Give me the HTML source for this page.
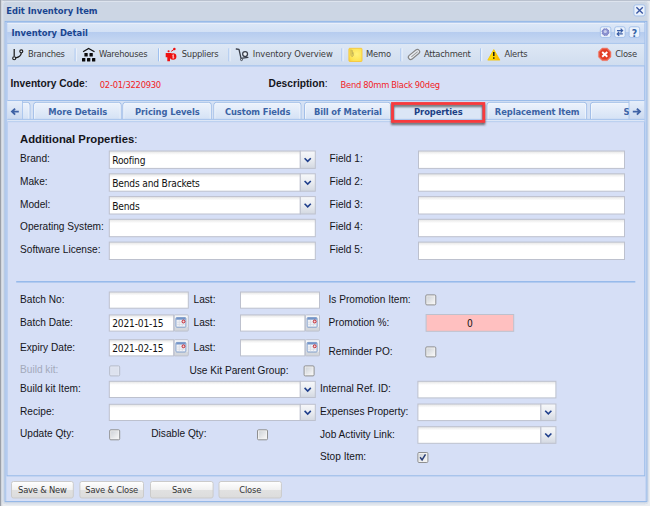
<!DOCTYPE html>
<html><head><meta charset="utf-8"><title>Edit Inventory Item</title>
<style>
*{box-sizing:border-box;margin:0;padding:0}
html,body{width:650px;height:506px;overflow:hidden;background:#e9ecf0}
body{position:relative;font-family:"DejaVu Sans Condensed","Liberation Sans",sans-serif;font-size:9.3px;color:#222}
#bg{position:absolute;left:0;top:0;display:block}
.t,.lbl{position:absolute;white-space:nowrap;line-height:14px}
.t{font-family:"DejaVu Sans Condensed","Liberation Sans",sans-serif;font-size:9.3px;letter-spacing:-0.2px}
.tbt{color:#3a3a3a}
.lbl{font-family:"Liberation Sans",sans-serif;font-size:10.15px;color:#15151a}
</style></head>
<body>
<svg id="bg" width="650" height="506" viewBox="0 0 650 506">
<defs>
<linearGradient id="gi" x1="0" y1="0" x2="0" y2="1"><stop offset="0" stop-color="#e4e4e4"/><stop offset="0.22" stop-color="#fff"/><stop offset="1" stop-color="#fff"/></linearGradient>
<linearGradient id="gt" x1="0" y1="0" x2="0" y2="1"><stop offset="0" stop-color="#f7f8fa"/><stop offset="0.5" stop-color="#e9ecf1"/><stop offset="1" stop-color="#d3d8e1"/></linearGradient>
<linearGradient id="gd" x1="0" y1="0" x2="0" y2="1"><stop offset="0" stop-color="#f6f7f9"/><stop offset="0.74" stop-color="#eceef2"/><stop offset="0.78" stop-color="#d6d9de"/><stop offset="1" stop-color="#d2d5da"/></linearGradient>
<linearGradient id="gc" x1="0" y1="0" x2="1" y2="1"><stop offset="0" stop-color="#cfd3d8"/><stop offset="1" stop-color="#f6f6f6"/></linearGradient>
<linearGradient id="gh" x1="0" y1="0" x2="0" y2="1"><stop offset="0" stop-color="#dde8f7"/><stop offset="0.43" stop-color="#d3e1f5"/><stop offset="0.47" stop-color="#b6ccef"/><stop offset="1" stop-color="#c7d8f2"/></linearGradient>
<linearGradient id="gtb" x1="0" y1="0" x2="0" y2="1"><stop offset="0" stop-color="#dee8f5"/><stop offset="1" stop-color="#d0ddef"/></linearGradient>
<linearGradient id="gtab" x1="0" y1="0" x2="0" y2="1"><stop offset="0" stop-color="#edf3fc"/><stop offset="1" stop-color="#d5e2f5"/></linearGradient>
<linearGradient id="gsc" x1="0" y1="0" x2="0" y2="1"><stop offset="0" stop-color="#e6eefa"/><stop offset="1" stop-color="#ccdaf0"/></linearGradient>
<radialGradient id="gm" cx="0.6" cy="0.45" r="0.75"><stop offset="0" stop-color="#fff27c"/><stop offset="0.7" stop-color="#fde353"/><stop offset="1" stop-color="#f9cf3e"/></radialGradient>
<linearGradient id="ga" x1="0" y1="0" x2="1" y2="0"><stop offset="0" stop-color="#ffe010"/><stop offset="0.55" stop-color="#ffd400"/><stop offset="1" stop-color="#ffa800"/></linearGradient>
<linearGradient id="gb" x1="0" y1="0" x2="0" y2="1"><stop offset="0" stop-color="#ffffff"/><stop offset="0.5" stop-color="#f1f1f1"/><stop offset="0.54" stop-color="#e1e1e1"/><stop offset="1" stop-color="#dcdcdc"/></linearGradient>
<filter id="sh" x="-10%" y="-30%" width="120%" height="180%"><feGaussianBlur stdDeviation="1.3"/></filter>
<clipPath id="cstrip"><rect x="7.4" y="100.9" width="621.6" height="18.2"/></clipPath>
</defs>
<rect x="0.00" y="0.00" width="650.00" height="506.00" fill="#e9ecf0"/>
<rect x="0.00" y="0.00" width="650.00" height="0.90" fill="#b4bdca"/>
<rect x="0.00" y="0.00" width="1.40" height="506.00" fill="#9a9fa8"/>
<rect x="1.40" y="0.00" width="1.00" height="506.00" fill="#d8dce2"/>
<rect x="2.30" y="1.00" width="646.40" height="503.20" rx="4" fill="#ccd6e4"/>
<rect x="2.80" y="1.50" width="645.40" height="502.20" rx="3.5" fill="none" stroke="#dde4ee" stroke-width="1"/>
<rect x="5.15" y="21.40" width="641.70" height="480.10" fill="#d6dff6" stroke="#95b8e8" stroke-width="1.0"/>
<rect x="6.90" y="22.20" width="637.90" height="453.60" fill="#d6dff6" stroke="#95b8e8" stroke-width="1.0"/>
<rect x="5.60" y="22.50" width="0.80" height="478.50" fill="#bbd0ef"/>
<rect x="645.40" y="22.50" width="0.80" height="478.50" fill="#bbd0ef"/>
<rect x="7.40" y="22.90" width="636.90" height="20.00" fill="url(#gh)"/>
<rect x="7.40" y="22.90" width="636.90" height="0.80" fill="#eef3fb"/>
<rect x="7.40" y="42.90" width="636.90" height="0.90" fill="#95b8e8"/>
<rect x="7.40" y="43.80" width="636.90" height="21.70" fill="url(#gtb)"/>
<rect x="7.40" y="65.45" width="636.90" height="0.90" fill="#95b8e8"/>
<rect x="633.95" y="4.85" width="11.10" height="11.10" rx="2" fill="#ebf2fc" stroke="#9fbde9" stroke-width="0.9"/>
<path d="M636.4 7.2 L642.8 13.6 M642.8 7.2 L636.4 13.6" stroke="#3a57a2" stroke-width="1.35" fill="none"/>
<rect x="600.35" y="26.75" width="10.50" height="10.70" rx="2" fill="#ebf2fc" stroke="#9fbde9" stroke-width="0.9"/>
<circle cx="605.45" cy="32.1" r="3.45" fill="#8a90cf" stroke="#6c74bd" stroke-width="1.0" stroke-dasharray="1.6 1.1"/><circle cx="605.45" cy="32.1" r="3.0" fill="#8a90cf"/><circle cx="605.3" cy="31.5" r="1.6" fill="#c9cfee"/>
<rect x="614.65" y="26.75" width="10.50" height="10.70" rx="2" fill="#ebf2fc" stroke="#9fbde9" stroke-width="0.9"/>
<path d="M617 30.6 H622.2 M620.6 28.6 L622.6 30.6 L620.6 32.6 M622.8 33.9 H617.6 M619.2 31.9 L617.2 33.9 L619.2 35.9" fill="none" stroke="#3b5ea6" stroke-width="1.25"/>
<rect x="629.15" y="26.75" width="10.50" height="10.70" rx="2" fill="#ebf2fc" stroke="#9fbde9" stroke-width="0.9"/>
<path d="M14.2 49.0 V56.6 M15.8 57.9 C19.2 57.2 21.0 55.6 21.3 53.2" fill="none" stroke="#1c1c1c" stroke-width="1.25"/><circle cx="14.2" cy="58.2" r="1.5" fill="#e4ecf8" stroke="#1c1c1c" stroke-width="1.15"/><circle cx="21.3" cy="51.3" r="1.5" fill="#e4ecf8" stroke="#1c1c1c" stroke-width="1.15"/>
<rect x="74.73" y="48.30" width="0.95" height="13.00" fill="#97bbee"/>
<rect x="75.68" y="48.30" width="0.95" height="13.00" fill="#f4f8fd"/>
<path d="M83.1 51.8 L88.6 48.4 L94.5 51.8" fill="none" stroke="#111" stroke-width="1.3" stroke-linejoin="miter"/>
<rect x="84.40" y="53.00" width="3.30" height="3.40" rx="0.5" fill="#0a0a0a"/>
<rect x="89.50" y="53.00" width="3.30" height="3.40" rx="0.5" fill="#0a0a0a"/>
<rect x="82.00" y="58.00" width="3.30" height="3.40" rx="0.5" fill="#0a0a0a"/>
<rect x="87.00" y="58.00" width="3.30" height="3.40" rx="0.5" fill="#0a0a0a"/>
<rect x="92.00" y="58.00" width="3.30" height="3.40" rx="0.5" fill="#0a0a0a"/>
<rect x="158.12" y="48.30" width="0.95" height="13.00" fill="#97bbee"/>
<rect x="159.07" y="48.30" width="0.95" height="13.00" fill="#f4f8fd"/>
<g fill="#ee1111"><circle cx="168.6" cy="51.3" r="1.05"/><path d="M165.7 52.9 H171.6 V57.2 H170 V61.2 H167.3 V57.2 H165.7 Z"/><circle cx="173.1" cy="56.5" r="3.3"/><circle cx="174.4" cy="49.0" r="1.25"/><path d="M171.2 51.4 L174.2 49.2" stroke="#ee1111" stroke-width="1.0"/></g><path d="M173.2 54.4 V58.6 M174.0 55.2 Q172.4 54.8 172.5 55.9 Q172.6 56.5 173.3 56.6 Q174.2 56.8 174.0 57.5 Q173.6 58.2 172.4 57.8" fill="none" stroke="#ffd9d9" stroke-width="0.7"/>
<rect x="228.53" y="48.30" width="0.95" height="13.00" fill="#97bbee"/>
<rect x="229.47" y="48.30" width="0.95" height="13.00" fill="#f4f8fd"/>
<path d="M236.3 49.0 L239.0 49.3 L241.0 58.3 L247.9 57.3" fill="none" stroke="#3a3f4a" stroke-width="1.3" stroke-linejoin="round" stroke-linecap="round"/><circle cx="245.1" cy="54.1" r="2.45" fill="#eef2f9" stroke="#3a3f4a" stroke-width="1.25"/><circle cx="241.5" cy="59.6" r="1.0" fill="#dfe6f1" stroke="#3a3f4a" stroke-width="0.9"/>
<rect x="341.52" y="48.30" width="0.95" height="13.00" fill="#97bbee"/>
<rect x="342.47" y="48.30" width="0.95" height="13.00" fill="#f4f8fd"/>
<rect x="348.9" y="48.3" width="13.1" height="13.2" rx="0.8" fill="url(#gm)" stroke="#f6c63c" stroke-width="0.9"/><path d="M351.0 49.6 V55.2 Q351.6 57.4 353.0 56.0 Q353.6 55.2 353.0 52.2 M352.0 50.0 Q352.6 52.6 352.4 54.6" fill="none" stroke="#b5a655" stroke-width="0.8"/>
<rect x="400.52" y="48.30" width="0.95" height="13.00" fill="#97bbee"/>
<rect x="401.47" y="48.30" width="0.95" height="13.00" fill="#f4f8fd"/>
<g transform="translate(414.0 54.45) rotate(-39.5)"><rect x="-6.6" y="-2.3" width="13.2" height="4.6" rx="2.3" fill="#e9edf3" stroke="#858585" stroke-width="1.15"/><path d="M-3.6 0.2 H4.6" stroke="#9b9b9b" stroke-width="1.0" fill="none"/></g>
<rect x="480.32" y="48.30" width="0.95" height="13.00" fill="#97bbee"/>
<rect x="481.27" y="48.30" width="0.95" height="13.00" fill="#f4f8fd"/>
<path d="M493.8 49.6 L499.9 60.1 H487.8 Z" fill="url(#ga)" stroke="#f6c500" stroke-width="0.8" stroke-linejoin="round"/><path d="M493.8 52.0 V56.0" stroke="#16161a" stroke-width="1.5"/><rect x="493.1" y="57.3" width="1.4" height="1.5" fill="#16161a"/>
<path d="M602.09 48.05 H607.31 L611.00 51.74 V56.96 L607.31 60.65 H602.09 L598.40 56.96 V51.74 Z" fill="#ef6b58" stroke="#ef7a68" stroke-width="0.5" stroke-linejoin="round"/><path d="M602.59 49.25 H606.81 L609.80 52.24 V56.46 L606.81 59.45 H602.59 L599.60 56.46 V52.24 Z" fill="#e23c22"/>
<path d="M602.2 52.0 L607.3 56.8 M607.3 52.0 L602.2 56.8" stroke="#fff" stroke-width="1.9" fill="none"/>
<rect x="7.40" y="100.00" width="636.90" height="22.20" fill="#d5e1f4"/>
<rect x="7.40" y="100.00" width="636.90" height="0.90" fill="#95b8e8"/>
<path d="M20.50 119.2 V104.90 Q20.50 102.4 23.00 102.4 H27.40 Q29.90 102.4 29.90 104.9 V119.2" fill="url(#gtab)" stroke="#9dbbe7" stroke-width="1" clip-path="url(#cstrip)"/>
<path d="M21.40 119 V105.2 Q21.40 103.3 23.40 103.3 H27.00 Q29.00 103.3 29.00 105.2 V119" fill="none" stroke="#f4f8fd" stroke-width="0.8" clip-path="url(#cstrip)"/>
<path d="M33.70 119.2 V104.90 Q33.70 102.4 36.20 102.4 H118.60 Q121.10 102.4 121.10 104.9 V119.2" fill="url(#gtab)" stroke="#9dbbe7" stroke-width="1" clip-path="url(#cstrip)"/>
<path d="M34.60 119 V105.2 Q34.60 103.3 36.60 103.3 H118.20 Q120.20 103.3 120.20 105.2 V119" fill="none" stroke="#f4f8fd" stroke-width="0.8" clip-path="url(#cstrip)"/>
<path d="M122.90 119.2 V104.90 Q122.90 102.4 125.40 102.4 H208.70 Q211.20 102.4 211.20 104.9 V119.2" fill="url(#gtab)" stroke="#9dbbe7" stroke-width="1" clip-path="url(#cstrip)"/>
<path d="M123.80 119 V105.2 Q123.80 103.3 125.80 103.3 H208.30 Q210.30 103.3 210.30 105.2 V119" fill="none" stroke="#f4f8fd" stroke-width="0.8" clip-path="url(#cstrip)"/>
<path d="M213.90 119.2 V104.90 Q213.90 102.4 216.40 102.4 H298.40 Q300.90 102.4 300.90 104.9 V119.2" fill="url(#gtab)" stroke="#9dbbe7" stroke-width="1" clip-path="url(#cstrip)"/>
<path d="M214.80 119 V105.2 Q214.80 103.3 216.80 103.3 H298.00 Q300.00 103.3 300.00 105.2 V119" fill="none" stroke="#f4f8fd" stroke-width="0.8" clip-path="url(#cstrip)"/>
<path d="M304.60 119.2 V104.90 Q304.60 102.4 307.10 102.4 H388.10 Q390.60 102.4 390.60 104.9 V119.2" fill="url(#gtab)" stroke="#9dbbe7" stroke-width="1" clip-path="url(#cstrip)"/>
<path d="M305.50 119 V105.2 Q305.50 103.3 307.50 103.3 H387.70 Q389.70 103.3 389.70 105.2 V119" fill="none" stroke="#f4f8fd" stroke-width="0.8" clip-path="url(#cstrip)"/>
<path d="M393.70 119.2 V104.90 Q393.70 102.4 396.20 102.4 H479.80 Q482.30 102.4 482.30 104.9 V119.2" fill="#dbe6f6" stroke="#9dbbe7" stroke-width="1" clip-path="url(#cstrip)"/>
<path d="M487.10 119.2 V104.90 Q487.10 102.4 489.60 102.4 H584.10 Q586.60 102.4 586.60 104.9 V119.2" fill="url(#gtab)" stroke="#9dbbe7" stroke-width="1" clip-path="url(#cstrip)"/>
<path d="M488.00 119 V105.2 Q488.00 103.3 490.00 103.3 H583.70 Q585.70 103.3 585.70 105.2 V119" fill="none" stroke="#f4f8fd" stroke-width="0.8" clip-path="url(#cstrip)"/>
<path d="M590.50 119.2 V104.90 Q590.50 102.4 593.00 102.4 H647.00 Q649.50 102.4 649.50 104.9 V119.2" fill="url(#gtab)" stroke="#9dbbe7" stroke-width="1" clip-path="url(#cstrip)"/>
<path d="M591.40 119 V105.2 Q591.40 103.3 593.40 103.3 H646.60 Q648.60 103.3 648.60 105.2 V119" fill="none" stroke="#f4f8fd" stroke-width="0.8" clip-path="url(#cstrip)"/>
<rect x="7.40" y="100.90" width="14.90" height="18.20" fill="url(#gsc)"/>
<rect x="22.05" y="100.90" width="0.90" height="18.30" fill="#a9c4ec"/>
<path d="M18.8 111.6 H12.6 M15.1 108.6 L12.0 111.6 L15.1 114.6" fill="none" stroke="#3f62a5" stroke-width="1.9"/>
<rect x="629.20" y="100.90" width="15.10" height="18.20" fill="url(#gsc)"/>
<rect x="628.55" y="100.90" width="0.90" height="18.30" fill="#a9c4ec"/>
<path d="M632.8 111.6 H639.4 M636.9 108.6 L640.0 111.6 L636.9 114.6" fill="none" stroke="#3f62a5" stroke-width="1.9"/>
<rect x="7.40" y="118.90" width="636.90" height="0.90" fill="#95b8e8"/>
<rect x="7.40" y="119.80" width="636.90" height="1.50" fill="#dde7f7"/>
<rect x="7.40" y="121.25" width="636.90" height="0.90" fill="#b4cbee"/>
<rect x="392.5" y="105.5" width="91.3" height="18.0" fill="none" stroke="#3c3c3c" stroke-opacity="0.75" stroke-width="2.8" filter="url(#sh)"/>
<rect x="392.50" y="103.50" width="91.30" height="17.90" fill="none" stroke="#f93a3d" stroke-width="2.8"/>
<rect x="109.30" y="151.00" width="191.00" height="17.40" fill="url(#gi)" stroke="#bdc1ce" stroke-width="1"/>
<rect x="300.30" y="151.00" width="15.00" height="17.40" fill="url(#gt)" stroke="#bdc1ce" stroke-width="1"/>
<path d="M304.60 158.20 L307.70 161.30 L310.80 158.20" fill="none" stroke="#1f3f8c" stroke-width="1.6"/>
<rect x="418.50" y="151.00" width="206.00" height="17.40" fill="url(#gi)" stroke="#bdc1ce" stroke-width="1"/>
<rect x="109.30" y="173.80" width="191.00" height="17.40" fill="url(#gi)" stroke="#bdc1ce" stroke-width="1"/>
<rect x="300.30" y="173.80" width="15.00" height="17.40" fill="url(#gt)" stroke="#bdc1ce" stroke-width="1"/>
<path d="M304.60 181.00 L307.70 184.10 L310.80 181.00" fill="none" stroke="#1f3f8c" stroke-width="1.6"/>
<rect x="418.50" y="173.80" width="206.00" height="17.40" fill="url(#gi)" stroke="#bdc1ce" stroke-width="1"/>
<rect x="109.30" y="196.60" width="191.00" height="17.40" fill="url(#gi)" stroke="#bdc1ce" stroke-width="1"/>
<rect x="300.30" y="196.60" width="15.00" height="17.40" fill="url(#gt)" stroke="#bdc1ce" stroke-width="1"/>
<path d="M304.60 203.80 L307.70 206.90 L310.80 203.80" fill="none" stroke="#1f3f8c" stroke-width="1.6"/>
<rect x="418.50" y="196.60" width="206.00" height="17.40" fill="url(#gi)" stroke="#bdc1ce" stroke-width="1"/>
<rect x="109.30" y="219.30" width="206.00" height="17.40" fill="url(#gi)" stroke="#bdc1ce" stroke-width="1"/>
<rect x="418.50" y="219.30" width="206.00" height="17.40" fill="url(#gi)" stroke="#bdc1ce" stroke-width="1"/>
<rect x="109.30" y="242.10" width="206.00" height="17.40" fill="url(#gi)" stroke="#bdc1ce" stroke-width="1"/>
<rect x="418.50" y="242.10" width="206.00" height="17.40" fill="url(#gi)" stroke="#bdc1ce" stroke-width="1"/>
<rect x="16.20" y="281.05" width="619.10" height="1.50" fill="#94b8ea"/>
<rect x="109.30" y="292.00" width="79.00" height="16.20" fill="url(#gi)" stroke="#bdc1ce" stroke-width="1"/>
<rect x="240.50" y="292.00" width="79.00" height="16.20" fill="url(#gi)" stroke="#bdc1ce" stroke-width="1"/>
<g>
<rect x="425.80" y="294.90" width="10.00" height="10.00" rx="1.1" fill="#f3f3f3" stroke="#8e8f90" stroke-width="1"/>
<rect x="427.20" y="296.30" width="7.20" height="7.20" fill="url(#gc)"/>
</g>
<rect x="109.30" y="314.90" width="64.40" height="16.20" fill="url(#gi)" stroke="#bdc1ce" stroke-width="1"/>
<rect x="174.20" y="314.90" width="14.10" height="16.20" rx="1" fill="url(#gd)" stroke="#bdc1ce" stroke-width="1"/>
<rect x="175.90" y="317.60" width="10.00" height="9.60" rx="0.8" fill="#f1f3f7" stroke="#7f9dca" stroke-width="1.0"/>
<rect x="176.20" y="317.80" width="9.40" height="1.90" fill="#7394c8"/>
<path d="M176.70 322.20 H185.10 M176.70 324.40 H185.10 M179.30 320.00 V326.60 M182.30 320.00 V326.60" stroke="#d4d9e2" stroke-width="0.7" fill="none"/>
<circle cx="183.50" cy="321.50" r="1.45" fill="#f6d9da" stroke="#c2222c" stroke-width="1.0"/>
<rect x="240.50" y="314.90" width="64.40" height="16.20" fill="url(#gi)" stroke="#bdc1ce" stroke-width="1"/>
<rect x="305.40" y="314.90" width="14.10" height="16.20" rx="1" fill="url(#gd)" stroke="#bdc1ce" stroke-width="1"/>
<rect x="307.10" y="317.60" width="10.00" height="9.60" rx="0.8" fill="#f1f3f7" stroke="#7f9dca" stroke-width="1.0"/>
<rect x="307.40" y="317.80" width="9.40" height="1.90" fill="#7394c8"/>
<path d="M307.90 322.20 H316.30 M307.90 324.40 H316.30 M310.50 320.00 V326.60 M313.50 320.00 V326.60" stroke="#d4d9e2" stroke-width="0.7" fill="none"/>
<circle cx="314.70" cy="321.50" r="1.45" fill="#f6d9da" stroke="#c2222c" stroke-width="1.0"/>
<rect x="426.10" y="314.50" width="87.60" height="16.80" fill="#ffc0c0" stroke="#bdc1ce" stroke-width="1"/>
<rect x="109.30" y="339.70" width="64.40" height="16.20" fill="url(#gi)" stroke="#bdc1ce" stroke-width="1"/>
<rect x="174.20" y="339.70" width="14.10" height="16.20" rx="1" fill="url(#gd)" stroke="#bdc1ce" stroke-width="1"/>
<rect x="175.90" y="342.40" width="10.00" height="9.60" rx="0.8" fill="#f1f3f7" stroke="#7f9dca" stroke-width="1.0"/>
<rect x="176.20" y="342.60" width="9.40" height="1.90" fill="#7394c8"/>
<path d="M176.70 347.00 H185.10 M176.70 349.20 H185.10 M179.30 344.80 V351.40 M182.30 344.80 V351.40" stroke="#d4d9e2" stroke-width="0.7" fill="none"/>
<circle cx="183.50" cy="346.30" r="1.45" fill="#f6d9da" stroke="#c2222c" stroke-width="1.0"/>
<rect x="240.50" y="339.70" width="64.40" height="16.20" fill="url(#gi)" stroke="#bdc1ce" stroke-width="1"/>
<rect x="305.40" y="339.70" width="14.10" height="16.20" rx="1" fill="url(#gd)" stroke="#bdc1ce" stroke-width="1"/>
<rect x="307.10" y="342.40" width="10.00" height="9.60" rx="0.8" fill="#f1f3f7" stroke="#7f9dca" stroke-width="1.0"/>
<rect x="307.40" y="342.60" width="9.40" height="1.90" fill="#7394c8"/>
<path d="M307.90 347.00 H316.30 M307.90 349.20 H316.30 M310.50 344.80 V351.40 M313.50 344.80 V351.40" stroke="#d4d9e2" stroke-width="0.7" fill="none"/>
<circle cx="314.70" cy="346.30" r="1.45" fill="#f6d9da" stroke="#c2222c" stroke-width="1.0"/>
<g>
<rect x="425.80" y="346.90" width="10.00" height="10.00" rx="1.1" fill="#f3f3f3" stroke="#8e8f90" stroke-width="1"/>
<rect x="427.20" y="348.30" width="7.20" height="7.20" fill="url(#gc)"/>
</g>
<g opacity="0.45">
<rect x="109.70" y="365.90" width="10.00" height="10.00" rx="1.1" fill="#f3f3f3" stroke="#8e8f90" stroke-width="1"/>
<rect x="111.10" y="367.30" width="7.20" height="7.20" fill="#e6e6e6"/>
</g>
<g>
<rect x="304.10" y="365.90" width="10.00" height="10.00" rx="1.1" fill="#f3f3f3" stroke="#8e8f90" stroke-width="1"/>
<rect x="305.50" y="367.30" width="7.20" height="7.20" fill="url(#gc)"/>
</g>
<rect x="109.30" y="381.30" width="191.00" height="16.20" fill="url(#gi)" stroke="#bdc1ce" stroke-width="1"/>
<rect x="300.30" y="381.30" width="15.00" height="16.20" fill="url(#gt)" stroke="#bdc1ce" stroke-width="1"/>
<path d="M304.60 387.90 L307.70 391.00 L310.80 387.90" fill="none" stroke="#1f3f8c" stroke-width="1.6"/>
<rect x="417.90" y="381.30" width="138.00" height="16.60" fill="url(#gi)" stroke="#bdc1ce" stroke-width="1"/>
<rect x="109.30" y="404.30" width="191.00" height="16.20" fill="url(#gi)" stroke="#bdc1ce" stroke-width="1"/>
<rect x="300.30" y="404.30" width="15.00" height="16.20" fill="url(#gt)" stroke="#bdc1ce" stroke-width="1"/>
<path d="M304.60 410.90 L307.70 414.00 L310.80 410.90" fill="none" stroke="#1f3f8c" stroke-width="1.6"/>
<rect x="417.90" y="404.00" width="123.00" height="16.60" fill="url(#gi)" stroke="#bdc1ce" stroke-width="1"/>
<rect x="540.90" y="404.00" width="15.00" height="16.60" fill="url(#gt)" stroke="#bdc1ce" stroke-width="1"/>
<path d="M545.20 410.80 L548.30 413.90 L551.40 410.80" fill="none" stroke="#1f3f8c" stroke-width="1.6"/>
<g>
<rect x="109.70" y="429.80" width="10.00" height="10.00" rx="1.1" fill="#f3f3f3" stroke="#8e8f90" stroke-width="1"/>
<rect x="111.10" y="431.20" width="7.20" height="7.20" fill="url(#gc)"/>
</g>
<g>
<rect x="257.50" y="429.80" width="10.00" height="10.00" rx="1.1" fill="#f3f3f3" stroke="#8e8f90" stroke-width="1"/>
<rect x="258.90" y="431.20" width="7.20" height="7.20" fill="url(#gc)"/>
</g>
<rect x="417.90" y="426.70" width="123.00" height="16.60" fill="url(#gi)" stroke="#bdc1ce" stroke-width="1"/>
<rect x="540.90" y="426.70" width="15.00" height="16.60" fill="url(#gt)" stroke="#bdc1ce" stroke-width="1"/>
<path d="M545.20 433.50 L548.30 436.60 L551.40 433.50" fill="none" stroke="#1f3f8c" stroke-width="1.6"/>
<g>
<rect x="417.90" y="452.50" width="10.00" height="10.00" rx="1.1" fill="#f3f3f3" stroke="#8e8f90" stroke-width="1"/>
<rect x="419.30" y="453.90" width="7.20" height="7.20" fill="url(#gc)"/>
</g>
<path d="M420.10 457.20 L422.10 459.90 L425.50 454.40" fill="none" stroke="#2a3f78" stroke-width="1.5"/>
<rect x="11.50" y="481.50" width="61.80" height="16.50" rx="2" fill="url(#gb)" stroke="#cbcbcb" stroke-width="1"/>
<rect x="79.90" y="481.50" width="63.60" height="16.50" rx="2" fill="url(#gb)" stroke="#cbcbcb" stroke-width="1"/>
<rect x="150.50" y="481.50" width="62.60" height="16.50" rx="2" fill="url(#gb)" stroke="#cbcbcb" stroke-width="1"/>
<rect x="219.00" y="481.50" width="62.40" height="16.50" rx="2" fill="url(#gb)" stroke="#cbcbcb" stroke-width="1"/>
</svg>
<div class="t" style="left:628.4px;top:26.4px;width:12px;text-align:center;font-size:10.4px;font-weight:bold;color:#3463a6;letter-spacing:0">?</div>
<div class="t" style="left:6.2px;top:3.78px;font-size:9.3px;font-weight:bold;color:#1a4590;letter-spacing:0">Edit Inventory Item</div>
<div class="t" style="left:11.5px;top:26.38px;font-size:9.3px;font-weight:bold;color:#1a4590;letter-spacing:0">Inventory Detail</div>
<div class="t tbt" style="left:28px;top:47.48px;font-size:9.3px;letter-spacing:-0.3px">Branches</div>
<div class="t tbt" style="left:99px;top:47.48px;font-size:9.3px;letter-spacing:-0.25px">Warehouses</div>
<div class="t tbt" style="left:181.8px;top:47.48px;font-size:9.3px;letter-spacing:-0.25px">Suppliers</div>
<div class="t tbt" style="left:252.8px;top:47.48px;font-size:9.3px;letter-spacing:-0.12px">Inventory Overview</div>
<div class="t tbt" style="left:366.0px;top:47.48px;font-size:9.3px;letter-spacing:-0.2px">Memo</div>
<div class="t tbt" style="left:424.0px;top:47.48px;font-size:9.3px;letter-spacing:-0.25px">Attachment</div>
<div class="t tbt" style="left:504.4px;top:47.48px;font-size:9.3px;letter-spacing:-0.2px">Alerts</div>
<div class="t tbt" style="left:615.2px;top:47.48px;font-size:9.3px;letter-spacing:-0.2px">Close</div>
<div class="lbl" style="left:10.5px;top:76.87px;font-size:10.2px;"><b>Inventory Code</b>:</div>
<div class="t" style="left:99.8px;top:77.78px;font-size:9.3px;color:#f21c24;letter-spacing:-0.25px">02-01/3220930</div>
<div class="lbl" style="left:268.6px;top:76.87px;font-size:10.2px;"><b>Description</b>:</div>
<div class="t" style="left:340.6px;top:77.78px;font-size:9.3px;color:#f21c24;letter-spacing:-0.3px">Bend 80mm Black 90deg</div>
<div class="t" style="left:33.5px;top:105.38px;width:88.4px;text-align:center;font-size:9.3px;font-weight:bold;letter-spacing:-0.08px;color:#3b63a5">More Details</div>
<div class="t" style="left:122.7px;top:105.38px;width:89.3px;text-align:center;font-size:9.3px;font-weight:bold;letter-spacing:-0.08px;color:#3b63a5">Pricing Levels</div>
<div class="t" style="left:213.7px;top:105.38px;width:88.0px;text-align:center;font-size:9.3px;font-weight:bold;letter-spacing:-0.08px;color:#3b63a5">Custom Fields</div>
<div class="t" style="left:304.4px;top:105.38px;width:87.0px;text-align:center;font-size:9.3px;font-weight:bold;letter-spacing:-0.08px;color:#3b63a5">Bill of Material</div>
<div class="t" style="left:393.5px;top:105.38px;width:89.6px;text-align:center;font-size:9.3px;font-weight:bold;letter-spacing:-0.08px;color:#1c3f85">Properties</div>
<div class="t" style="left:486.9px;top:105.38px;width:100.5px;text-align:center;font-size:9.3px;font-weight:bold;letter-spacing:-0.08px;color:#3b63a5">Replacement Item</div>
<div class="t" style="left:623.6px;top:105.38px;font-size:9.3px;font-weight:bold;color:#3f66a8;width:5.5px;overflow:hidden">S</div>
<div class="lbl" style="left:20px;top:132.48px;font-size:11.3px;"><b>Additional Properties</b>:</div>
<div class="lbl" style="left:20px;top:152.08px;font-size:10.15px;">Brand:</div>
<div class="t" style="left:112.2px;top:154.09px;font-size:10.15px;color:#111;letter-spacing:-0.17px;">Roofing</div>
<div class="lbl" style="left:329.5px;top:152.08px;font-size:10.15px;">Field 1:</div>
<div class="lbl" style="left:20px;top:174.88px;font-size:10.15px;">Make:</div>
<div class="t" style="left:112.2px;top:176.89px;font-size:10.15px;color:#111;letter-spacing:-0.17px;">Bends and Brackets</div>
<div class="lbl" style="left:329.5px;top:174.88px;font-size:10.15px;">Field 2:</div>
<div class="lbl" style="left:20px;top:197.68px;font-size:10.15px;">Model:</div>
<div class="t" style="left:112.2px;top:199.69px;font-size:10.15px;color:#111;letter-spacing:-0.17px;">Bends</div>
<div class="lbl" style="left:329.5px;top:197.68px;font-size:10.15px;">Field 3:</div>
<div class="lbl" style="left:20px;top:220.38px;font-size:10.15px;">Operating System:</div>
<div class="lbl" style="left:329.5px;top:220.38px;font-size:10.15px;">Field 4:</div>
<div class="lbl" style="left:20px;top:243.18px;font-size:10.15px;">Software License:</div>
<div class="lbl" style="left:329.5px;top:243.18px;font-size:10.15px;">Field 5:</div>
<div class="lbl" style="left:20px;top:292.58px;font-size:10.15px;">Batch No:</div>
<div class="lbl" style="left:193.5px;top:292.58px;font-size:10.15px;">Last:</div>
<div class="lbl" style="left:328.5px;top:292.58px;font-size:10.15px;">Is Promotion Item:</div>
<div class="lbl" style="left:20px;top:316.08px;font-size:10.15px;">Batch Date:</div>
<div class="t" style="left:112.2px;top:317.39px;font-size:10.15px;color:#111;letter-spacing:-0.17px;">2021-01-15</div>
<div class="lbl" style="left:193.5px;top:316.08px;font-size:10.15px;">Last:</div>
<div class="lbl" style="left:328.5px;top:316.18px;font-size:10.15px;">Promotion %:</div>
<div class="t" style="left:425.6px;top:317.29px;width:88.6px;text-align:center;font-size:10.15px;color:#111;">0</div>
<div class="lbl" style="left:20px;top:340.68px;font-size:10.15px;">Expiry Date:</div>
<div class="t" style="left:112.2px;top:342.19px;font-size:10.15px;color:#111;letter-spacing:-0.17px;">2021-02-15</div>
<div class="lbl" style="left:193.5px;top:340.68px;font-size:10.15px;">Last:</div>
<div class="lbl" style="left:328.5px;top:344.78px;font-size:10.15px;">Reminder PO:</div>
<div class="lbl" style="left:20px;top:363.18px;font-size:10.15px;color:#a3a9bb">Build kit:</div>
<div class="lbl" style="left:189.5px;top:363.68px;font-size:10.15px;">Use Kit Parent Group:</div>
<div class="lbl" style="left:20px;top:381.78px;font-size:10.15px;">Build kit Item:</div>
<div class="lbl" style="left:320px;top:381.78px;font-size:10.15px;">Internal Ref. ID:</div>
<div class="lbl" style="left:20px;top:404.78px;font-size:10.15px;">Recipe:</div>
<div class="lbl" style="left:320px;top:404.78px;font-size:10.15px;">Expenses Property:</div>
<div class="lbl" style="left:20px;top:427.38px;font-size:10.15px;">Update Qty:</div>
<div class="lbl" style="left:151.3px;top:427.38px;font-size:10.15px;">Disable Qty:</div>
<div class="lbl" style="left:320px;top:427.78px;font-size:10.15px;">Job Activity Link:</div>
<div class="lbl" style="left:320px;top:450.48px;font-size:10.15px;">Stop Item:</div>
<div class="t" style="left:11.0px;top:483.18px;width:62.8px;text-align:center;font-size:9.3px;color:#333">Save &amp; New</div>
<div class="t" style="left:79.4px;top:483.18px;width:64.6px;text-align:center;font-size:9.3px;color:#333">Save &amp; Close</div>
<div class="t" style="left:150.0px;top:483.18px;width:63.6px;text-align:center;font-size:9.3px;color:#333">Save</div>
<div class="t" style="left:218.5px;top:483.18px;width:63.4px;text-align:center;font-size:9.3px;color:#333">Close</div>
</body></html>
